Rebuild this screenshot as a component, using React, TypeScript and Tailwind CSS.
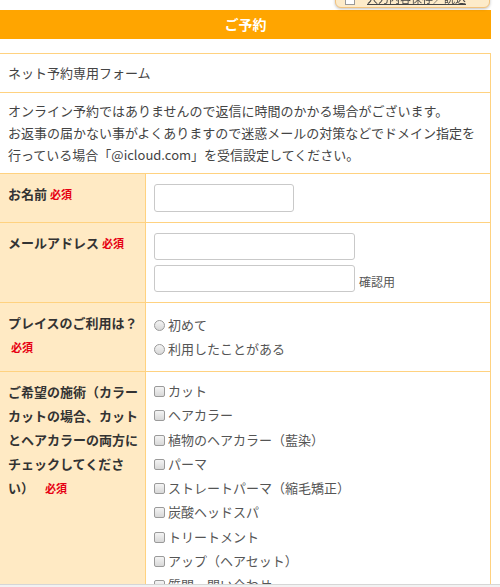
import React from "react";

const font = { fontFamily: '"Noto Sans CJK JP", "Noto Sans", sans-serif' };

const menus = [
  "カット",
  "ヘアカラー",
  "植物のヘアカラー（藍染）",
  "パーマ",
  "ストレートパーマ（縮毛矯正）",
  "炭酸ヘッドスパ",
  "トリートメント",
  "アップ（ヘアセット）",
  "質問・問い合わせ",
];

function Req({ className = "" }: { className?: string }) {
  return <span className={`text-[11px] font-bold text-[#e60012] ${className}`}>必須</span>;
}

function Box({ round }: { round?: boolean }) {
  return (
    <span
      className={`inline-block w-[11px] h-[11px] mr-[3px] border border-[#9a9a9a] bg-gradient-to-b from-[#f4f4f4] to-[#d8d8d8] align-[-1px] ${
        round ? "rounded-full" : "rounded-[2px]"
      }`}
    />
  );
}

function Row({ label, children, pad = "py-2" }: { label: React.ReactNode; children: React.ReactNode; pad?: string }) {
  return (
    <div className="flex border-b border-[#ffd280]">
      <div className="w-[146px] shrink-0 bg-[#ffeac4] border-r border-[#ffd280] pl-2 pr-0 py-2 text-[13px] leading-[24px] font-bold text-[#333] whitespace-nowrap">
        {label}
      </div>
      <div className={`flex-1 px-2 ${pad} text-[13px] leading-[24px] text-[#555]`}>{children}</div>
    </div>
  );
}

export default function App() {
  return (
    <div style={font} className="relative w-[500px] h-[587px] bg-white overflow-hidden">
      {/* floating save panel */}
      <div className="fixed top-[-14px] left-[335px] w-[155px] h-[22px] rounded-md bg-[#fdebc9] border border-[#f1c27e] shadow-[0_1px_3px_rgba(0,0,0,0.25)] flex items-end pb-[2px] px-[9px] text-[11px] leading-[13px] z-10">
        <span className="inline-block w-[10px] h-[10px] border border-[#999] bg-white mr-[12px]" />
        <span className="underline text-[#444]">入力内容保存／読込</span>
      </div>

      <div className="w-[491px] pt-[10px]">
        <div className="h-[29px] bg-[#ffa500] flex items-center justify-center text-white font-bold text-[14px]">
          ご予約
        </div>

        <div className="mt-[14px] border-t border-r border-[#ffd280]">
          <div className="border-b border-[#ffd280] px-2 py-2 text-[13px] leading-[22px] text-[#444]">
            ネット予約専用フォーム
          </div>
          <div className="border-b border-[#ffd280] px-2 py-[7px] text-[13px] leading-[22px] text-[#444]">
            オンライン予約ではありませんので返信に時間のかかる場合がございます。
            <br />
            お返事の届かない事がよくありますので迷惑メールの対策などでドメイン指定を
            <br />
            行っている場合「@icloud.com」を受信設定してください。
          </div>

          <Row
            label={
              <>
                お名前 <Req />
              </>
            }
            pad="py-[10px]"
          >
            <input className="block w-[140px] h-[28px] rounded-[3px] border border-[#c9c9c9] bg-white outline-none" />
          </Row>

          <Row
            label={
              <>
                メールアドレス <Req />
              </>
            }
            pad="py-[10px]"
          >
            <input className="block w-[201px] h-[27px] rounded-[3px] border border-[#c9c9c9] bg-white outline-none" />
            <div className="flex items-end mt-[5px]">
              <input className="block w-[201px] h-[27px] rounded-[3px] border border-[#c9c9c9] bg-white outline-none" />
              <span className="ml-[4px] text-[12px] leading-[20px] text-[#555]">確認用</span>
            </div>
          </Row>

          <Row
            label={
              <>
                プレイスのご利用は？
                <br />
                <Req className="ml-[3px]" />
              </>
            }
            pad="py-[10px]"
          >
            <div>
              <Box round />
              初めて
            </div>
            <div>
              <Box round />
              利用したことがある
            </div>
          </Row>

          <Row
            label={
              <>
                ご希望の施術（カラー
                <br />
                カットの場合、カット
                <br />
                とヘアカラーの両方に
                <br />
                チェックしてくださ
                <br />
                い） <Req className="ml-[8px]" />
              </>
            }
            pad="py-[7px]"
          >
            {menus.map((m) => (
              <div key={m} className="leading-[24.3px]">
                <Box />
                {m}
              </div>
            ))}
          </Row>
        </div>
      </div>

      <div className="fixed bottom-0 left-0 w-[500px] h-[3px] bg-[#f2f2f2] border-t border-[#d6d6d6] z-10" />
    </div>
  );
}
